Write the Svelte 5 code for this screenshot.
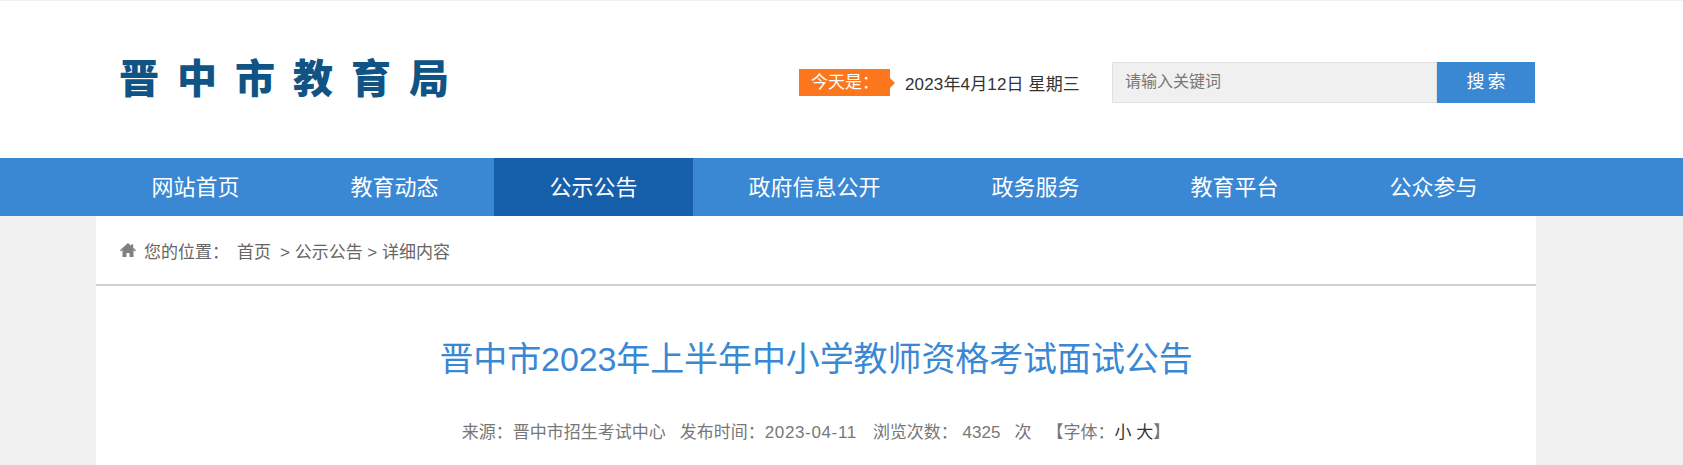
<script>
  const nav = ['网站首页', '教育动态', '公示公告', '政府信息公开', '政务服务', '教育平台', '公众参与'];
</script>

<div class="page">
  <header class="top">
    <div class="logo">晋中市教育局</div>
    <div class="today">
      <span class="badge">今天是：</span>
      <span class="date">2023年4月12日 星期三</span>
    </div>
    <div class="search">
      <span class="input">请输入关键词</span>
      <span class="btn">搜索</span>
    </div>
  </header>

  <nav class="nav">
    {#each nav as item, i}
      <a class="item" class:active={i === 2} href="#top">{item}</a>
    {/each}
  </nav>

  <main class="wrap">
    <div class="crumb">
      <svg class="home" viewBox="0 0 16 16" width="16" height="16" aria-hidden="true">
        <path d="M8 1 0 8.2 1 9.4 2.5 8.1V15H6.5V11H9.5V15H13.5V8.1L15 9.4 16 8.2 13.2 5.7V2.5H11V3.7Z" fill="#808080" />
      </svg>
      <span class="here">您的位置：</span>
      <span class="first">首页</span>
      <span class="rest">&gt; 公示公告 &gt; 详细内容</span>
    </div>
    <article class="article">
      <h1>晋中市2023年上半年中小学教师资格考试面试公告</h1>
      <p class="meta">
        <span>来源：晋中市招生考试中心</span>
        <span class="time">发布时间：<span class="stamp">2023-04-11</span></span>
        <span>浏览次数： 4325 &nbsp; 次</span>
        <span class="size">【字体：<b>小 大</b>】</span>
      </p>
    </article>
  </main>
</div>

<style>
  :global(body) {
    margin: 0;
    background: #f0f0f0;
    overflow: hidden;
    font-family: "Liberation Sans", "Noto Sans CJK SC", sans-serif;
  }
  .page {
    width: 1683px;
    height: 465px;
    overflow: hidden;
  }
  .top {
    height: 158px;
    background: #fff;
    padding-top: 61px;
    padding-left: 119px;
    box-sizing: border-box;
    display: flex;
    align-items: flex-start;
    border-top: 1px solid #f0f0f0;
  }
  .logo {
    width: 680px;
    font-family: "Noto Sans CJK SC", sans-serif;
    font-weight: 900;
    font-size: 40px;
    line-height: 28px;
    letter-spacing: 18px;
    color: #0f5485;
    white-space: nowrap;
  }
  .today {
    display: flex;
    align-items: center;
    width: 313px;
    height: 41px;
  }
  .badge {
    position: relative;
    width: 91px;
    height: 27px;
    line-height: 27px;
    background: #fb761d;
    color: #fff;
    box-sizing: border-box;
    padding-left: 12px;
    font-size: 17px;
  }
  .badge::after {
    content: "";
    position: absolute;
    right: -5px;
    top: 9px;
    border-left: 5px solid #fb761d;
    border-top: 5px solid transparent;
    border-bottom: 5px solid transparent;
  }
  .date {
    margin-left: 15px;
    font-size: 17px;
    letter-spacing: 0.15px;
    color: #333;
  }
  .search {
    display: flex;
    height: 41px;
  }
  .input {
    width: 325px;
    box-sizing: border-box;
    height: 41px;
    line-height: 37px;
    background: #f0f0f0;
    border: 1px solid #e0e0e0;
    padding-left: 12px;
    font-size: 16px;
    color: #777;
  }
  .btn {
    width: 98px;
    height: 41px;
    box-sizing: border-box;
    padding-left: 3px;
    line-height: 41px;
    background: #3a87d4;
    color: #fff;
    text-align: center;
    font-size: 18px;
    letter-spacing: 3px;
  }
  .nav {
    height: 58px;
    background: #3a87d4;
    display: flex;
    padding-left: 96px;
  }
  .item {
    padding: 0 55.5px;
    height: 58px;
    line-height: 60px;
    font-size: 22px;
    color: #fff;
    text-decoration: none;
    white-space: nowrap;
  }
  .active {
    background: #1660ab;
  }
  .wrap {
    width: 1440px;
    margin-left: 96px;
    height: 249px;
    background: #fff;
  }
  .crumb {
    height: 70px;
    box-sizing: border-box;
    border-bottom: 2px solid #d0d0d0;
    padding-left: 24px;
    display: flex;
    align-items: center;
    font-size: 17px;
    color: #666;
  }
  .home {
    margin-right: 8px;
  }
  .first {
    margin-left: 8px;
  }
  .rest {
    margin-left: 9px;
  }
  .article {
    text-align: center;
  }
  h1 {
    margin: 0;
    padding-top: 50px;
    font-size: 34px;
    line-height: 46px;
    font-weight: 400;
    letter-spacing: -0.1px;
    color: #3a87d4;
  }
  .meta {
    margin: 39px 0 0;
    font-size: 17px;
    line-height: 24px;
    color: #777;
    display: flex;
    justify-content: center;
    gap: 16px;
  }
  .time {
    margin-left: -2px;
  }
  .stamp {
    letter-spacing: 0.65px;
  }
  .size {
    margin-left: -1px;
  }
  .meta b {
    font-weight: 400;
    color: #333;
  }
</style>
